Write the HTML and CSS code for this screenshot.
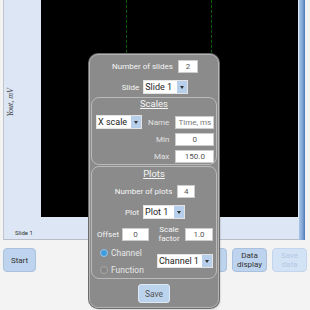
FILE: index.html
```html
<!DOCTYPE html>
<html lang="en">

<head>
    <meta charset="UTF-8" />
    <meta name="viewport" content="width=device-width, initial-scale=1" />
    <title>Slides</title>
    <link rel="stylesheet" href="styles.css">
</head>

<body>
    <div class="chart">
        <div class="chart-main">
            <div class="plot-row">
                <div class="axis"><span class="axis-label">Yout, mV</span></div>
                <div class="plot">
                    <div class="plot-cell"></div>
                    <div class="plot-cell"></div>
                    <div class="plot-cell last"></div>
                </div>
            </div>
            <div class="chart-footer">Slide 1</div>
        </div>
        <div class="chart-edge"></div>
    </div>

    <div class="toolbar">
        <button class="btn start">Start</button>
        <div class="toolbar-right">
            <button class="btn">Print<br>plot</button>
            <button class="btn">Data<br>display</button>
            <button class="btn disabled">Save<br>data</button>
        </div>
    </div>

    <!-- settings dialog over the chart -->
    <div class="dialog">
        <div class="dialog-row">
            <label for="numSlides">Number of slides</label>
            <input type="text" id="numSlides" class="field num-field" value="2" readonly />
        </div>
        <div class="dialog-row row-slide">
            <label>Slide</label>
            <div class="select slide-select">
                <span class="select-text">Slide 1</span>
                <span class="select-arrow"></span>
            </div>
        </div>

        <div class="group scales">
            <div class="group-title">Scales</div>
            <div class="scale-grid">
                <div class="select x-select">
                    <span class="select-text">X scale</span>
                    <span class="select-arrow"></span>
                </div>
                <label class="dim">Name</label>
                <input type="text" class="field hint" value="Time, ms" readonly />
                <label class="dim col-two">Min</label>
                <input type="text" class="field" value="0" readonly />
                <label class="dim col-two">Max</label>
                <input type="text" class="field" value="150.0" readonly />
            </div>
        </div>

        <div class="group plots">
            <div class="group-title">Plots</div>
            <div class="dialog-row row-plots">
                <label for="numPlots">Number of plots</label>
                <input type="text" id="numPlots" class="field plots-field" value="4" readonly />
            </div>
            <div class="dialog-row row-plot">
                <label>Plot</label>
                <div class="select plot-select">
                    <span class="select-text">Plot 1</span>
                    <span class="select-arrow"></span>
                </div>
            </div>
            <div class="offset-row">
                <label>Offset</label>
                <input type="text" class="field offset-field" value="0" readonly />
                <label class="scale-label">Scale<br>factor</label>
                <input type="text" class="field factor-field" value="1.0" readonly />
            </div>
            <div class="source-row">
                <div class="radios">
                    <div class="radio-item"><span class="radio checked"></span>Channel</div>
                    <div class="radio-item"><span class="radio"></span>Function</div>
                </div>
                <div class="select channel-select">
                    <span class="select-text">Channel 1</span>
                    <span class="select-arrow"></span>
                </div>
            </div>
        </div>

        <button class="save">Save</button>
    </div>
</body>

</html>
```

FILE: styles.css
```css
body {
    margin: 0;
    width: 310px;
    height: 310px;
    overflow: hidden;
    background: #f3f3f3;
    font-family: "Roboto", "Liberation Sans", sans-serif;
}

/* chart area */
.chart {
    display: flex;
    width: 302px;
    height: 240px;
    margin-left: 3px;
}

.chart-main {
    flex: 1;
    display: flex;
    flex-direction: column;
    background: #dce6f5;
    border-left: 1px solid #c2c6cc;
    border-bottom: 1px solid #b9bec6;
}

.plot-row {
    display: flex;
    height: 217px;
}

.axis {
    width: 35px;
    padding-left: 2px;
    padding-bottom: 12px;
    display: flex;
    align-items: center;
}

.axis-label {
    writing-mode: vertical-rl;
    transform: rotate(180deg);
    font-family: "Liberation Serif", serif;
    font-style: italic;
    font-size: 8px;
    line-height: 9px;
    color: #333;
}

.plot {
    width: 257px;
    background: #000;
    display: grid;
    grid-template-columns: 1fr 1fr 1fr;
}

.plot-cell {
    border-right: 1px dashed #0d5e0d;
}

.plot-cell.last {
    border-right: none;
}

.chart-footer {
    flex: 1;
    display: flex;
    align-items: flex-end;
    padding: 0 0 2px 11px;
    font-size: 6px;
    line-height: 8px;
    color: #333;
}

.chart-edge {
    width: 6px;
    background: linear-gradient(to right, #aac5e8, #7ea3d3 60%, #4b78b3);
}

/* bottom buttons */
.toolbar {
    display: flex;
    margin-top: 8px;
    padding: 0 3px;
    height: 24px;
}

.toolbar-right {
    margin-left: auto;
    display: flex;
    gap: 5px;
}

.btn {
    width: 35px;
    height: 24px;
    padding: 0;
    background: #bed3ed;
    border: 1px solid #a9c0de;
    border-radius: 4px;
    font-family: inherit;
    font-size: 8px;
    line-height: 9px;
    color: #333;
}

.btn.start {
    width: 33px;
}

.btn.disabled {
    background: #d3e2f4;
    border-color: #c3d5ec;
    color: #b4c9e4;
}

/* dialog */
.dialog {
    position: absolute;
    left: 89px;
    top: 54px;
    width: 130px;
    height: 254px;
    box-sizing: border-box;
    padding: 5px 1px 4px;
    background: #8b8b8b;
    border: 1px solid #b4b4b4;
    border-radius: 9px;
    box-shadow: 0 0 0 1px #6c6c6c, 1px 1px 2px rgba(0, 0, 0, 0.3);
    display: flex;
    flex-direction: column;
}

label {
    font-size: 8px;
    color: #f6f6f6;
}

label.dim {
    color: #e2e2e2;
}

.dialog-row {
    display: flex;
    justify-content: center;
    align-items: center;
    gap: 5px;
    padding-left: 2px;
}

.row-slide {
    margin-top: 7px;
    gap: 4px;
}

.field {
    box-sizing: border-box;
    height: 13px;
    padding: 0;
    margin: 0;
    border: 1px solid #cdcdcd;
    background: #fff;
    font-family: inherit;
    font-size: 8px;
    color: #555;
    text-align: center;
    outline: none;
}

.field.hint {
    color: #777;
}

.num-field {
    width: 20px;
}

.select {
    box-sizing: border-box;
    height: 14px;
    display: flex;
    background: #fff;
    border: 1px solid #e4e4e4;
}

.select-text {
    flex: 1;
    padding-left: 1px;
    font-size: 9px;
    line-height: 12px;
    color: #222;
    white-space: nowrap;
    overflow: hidden;
}

.select-arrow {
    width: 10px;
    background: #b7cfeb;
    display: flex;
    align-items: center;
    justify-content: center;
}

.select-arrow::after {
    content: "";
    border-left: 2.5px solid transparent;
    border-right: 2.5px solid transparent;
    border-top: 3px solid #333;
}

.slide-select {
    width: 45px;
}

/* grouped boxes */
.group {
    border: 1px solid #bababa;
    border-radius: 8px;
}

.scales {
    margin-top: 3px;
    height: 68px;
    box-sizing: border-box;
}

.group-title {
    text-align: center;
    text-decoration: underline;
    font-size: 9.5px;
    line-height: 12px;
    color: #f4f4f4;
}

.scales .group-title {
    margin-bottom: 5px;
}

.scale-grid {
    display: grid;
    grid-template-columns: 46px 1fr 39px;
    column-gap: 6px;
    row-gap: 4px;
    padding: 0 3px 0 4px;
    align-items: center;
}

.scale-grid label {
    text-align: right;
}

.scale-grid .col-two {
    grid-column: 2;
}

.scale-grid .field {
    width: 39px;
}

.x-select {
    width: 46px;
}

.plots {
    margin-top: 1px;
    height: 113px;
    box-sizing: border-box;
    padding-top: 1px;
}

.row-plots {
    margin-top: 5px;
}

.plots-field {
    width: 18px;
}

.row-plot {
    margin-top: 7px;
    gap: 4px;
}

.plot-select {
    width: 42px;
}

.offset-row {
    margin-top: 5px;
    height: 20px;
    display: flex;
    align-items: center;
    padding: 0 3px 0 5px;
}

.offset-field {
    width: 27px;
    margin-left: 3px;
}

.scale-label {
    flex: 1;
    text-align: center;
    line-height: 9px;
    padding-left: 4px;
}

.factor-field {
    width: 28px;
}

.source-row {
    margin-top: 3px;
    height: 28px;
    display: flex;
    align-items: center;
    padding: 0 3px 0 8px;
}

.radios {
    display: flex;
    flex-direction: column;
    gap: 7px;
}

.radio-item {
    display: flex;
    align-items: center;
    gap: 3px;
    height: 10px;
    font-size: 8.5px;
    color: #e6e6e6;
}

.radio {
    width: 8px;
    height: 8px;
    box-sizing: border-box;
    border-radius: 50%;
    border: 1px solid #a9a9a9;
    background: #858585;
}

.radio.checked {
    border-color: #9ec3e6;
    background: #3f9ddd;
}

.channel-select {
    width: 56px;
    margin-left: auto;
}

.save {
    align-self: center;
    margin-top: 5px;
    width: 32px;
    height: 19px;
    padding: 0;
    background: #bcd3ed;
    border: 1px solid #dfe9f5;
    border-radius: 3px;
    font-family: inherit;
    font-size: 8.5px;
    color: #555;
}
```
